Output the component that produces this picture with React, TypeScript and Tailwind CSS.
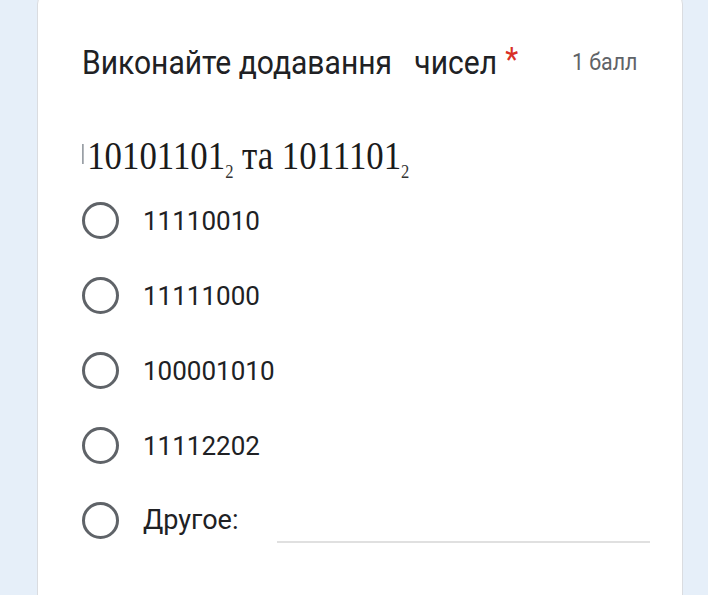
import React from "react";

const options = ["11110010", "11111000", "100001010", "11112202"];

function Radio() {
  return (
    <div className="w-[37px] h-[37px] rounded-full border-[3px] border-[#5f6368] shrink-0" />
  );
}

function Sub() {
  return (
    <span className="text-[19px] leading-none relative top-[9px] text-[#333]">2</span>
  );
}

export default function App() {
  return (
    <div className="w-[708px] h-[595px] overflow-hidden bg-[#e6eff9]" style={{ fontFamily: "Roboto, 'Noto Sans', sans-serif" }}>
      <div className="ml-[37px] w-[646px] mt-[-12px] h-[640px] bg-white rounded-[16px] border border-[#dadce0] pl-[44px] pr-[45px] pt-[56px]">
        <div className="flex items-center justify-between h-[34px]">
          <div className="flex items-center text-[33px] text-[#202124] whitespace-pre leading-none scale-x-[0.91] origin-left">
            <span>Виконайте додавання   чисел</span>
            <span className="text-[#d93025] ml-[9px] -mt-[6px]">*</span>
          </div>
          <div className="text-[23px] text-[#5f6368] leading-none scale-x-[0.93] origin-right">1 балл</div>
        </div>
        <div className="flex items-baseline h-[40px] pt-[4px] mt-[53px] text-[#1b1b1b] scale-x-[0.87] origin-left whitespace-pre" style={{ fontFamily: "'Liberation Serif', 'Times New Roman', serif" }}>
          <div className="w-[2px] h-[20px] bg-[#9aa0a6] mr-[4px] self-center" />
          <span className="text-[40px] leading-none">10101101</span>
          <Sub />
          <span className="text-[40px] leading-none"> та 1011101</span>
          <Sub />
        </div>
        <div className="flex flex-col mt-[11px]">
          {options.map((o) => (
            <div key={o} className="flex items-center h-[75px] gap-[24px]">
              <Radio />
              <span className="text-[26px] text-[#202124] leading-none">{o}</span>
            </div>
          ))}
          <div className="flex items-center h-[75px] gap-[24px]">
            <Radio />
            <span className="text-[27px] text-[#202124] leading-none w-[110px]">Другое:</span>
            <div className="flex-1 h-[44px] border-b-2 border-[#e0e0e0] mr-[-13px]" />
          </div>
        </div>
      </div>
    </div>
  );
}
